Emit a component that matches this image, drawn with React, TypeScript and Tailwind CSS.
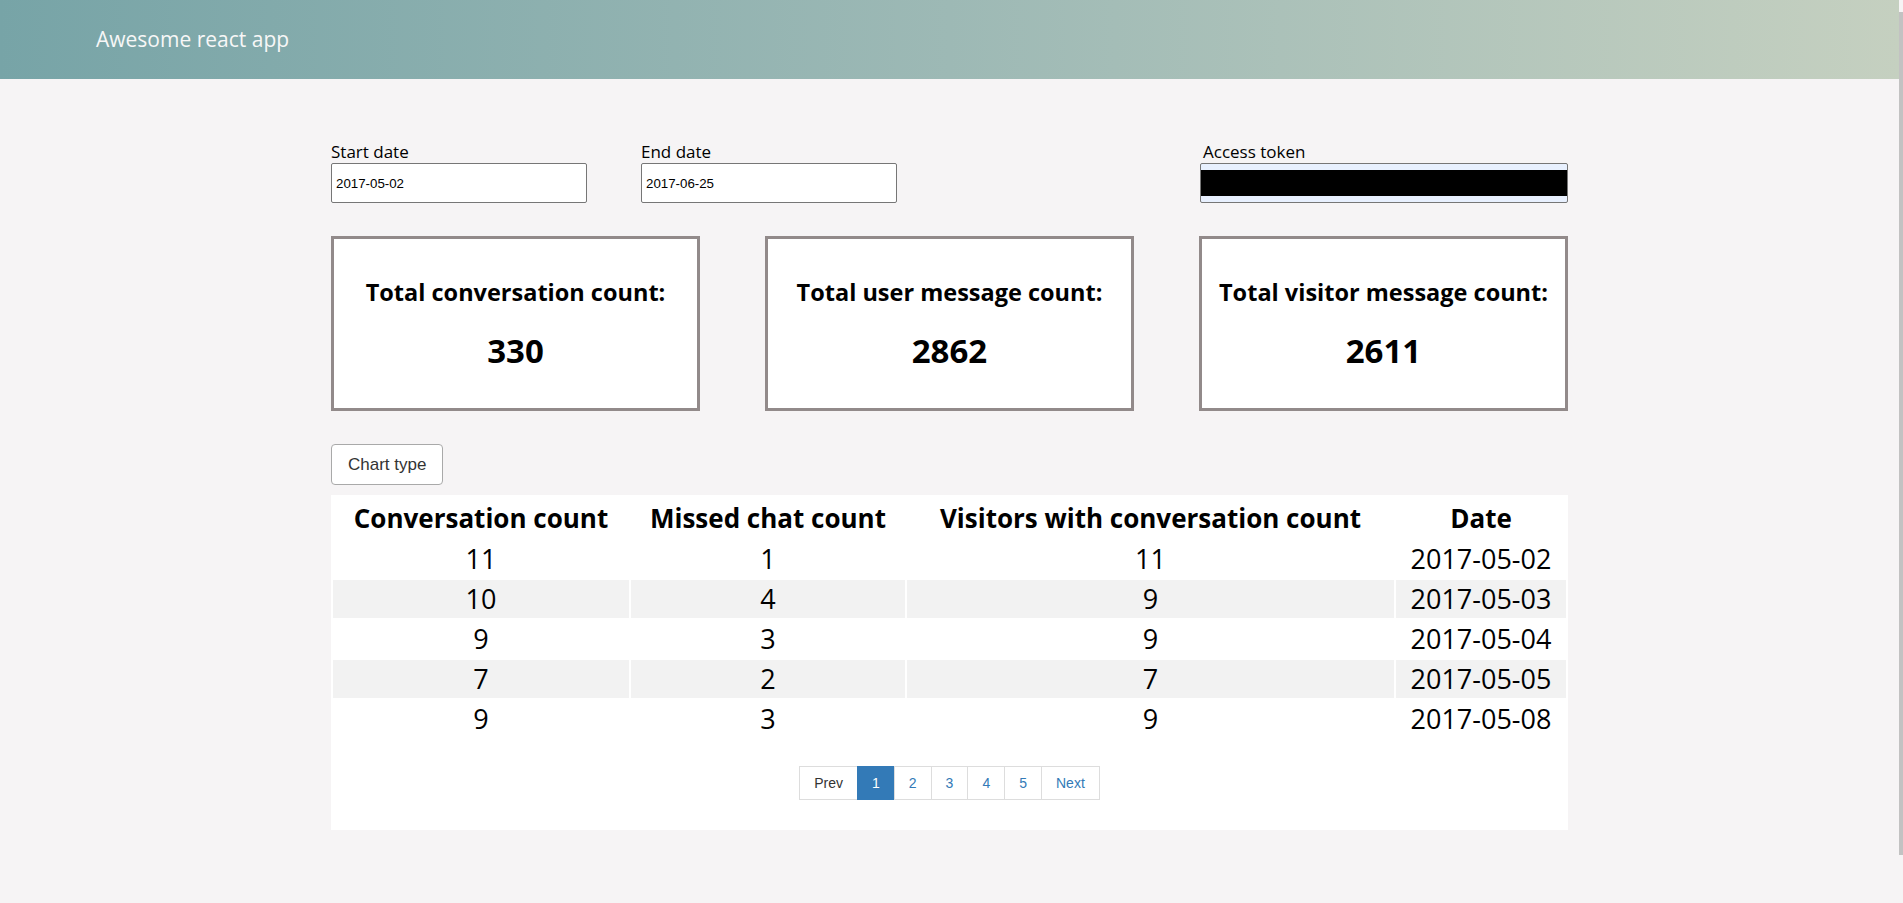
import React from "react";

const rows = [
  { conv: 11, missed: 1, visitors: 11, date: "2017-05-02" },
  { conv: 10, missed: 4, visitors: 9, date: "2017-05-03" },
  { conv: 9, missed: 3, visitors: 9, date: "2017-05-04" },
  { conv: 7, missed: 2, visitors: 7, date: "2017-05-05" },
  { conv: 9, missed: 3, visitors: 9, date: "2017-05-08" },
];

const totals = [
  { label: "Total conversation count:", value: 330 },
  { label: "Total user message count:", value: 2862 },
  { label: "Total visitor message count:", value: 2611 },
];

const pages = ["1", "2", "3", "4", "5"];

export default function App() {
  return (
    <div className="flex min-h-screen bg-[#f6f4f5] font-['Open_Sans',sans-serif] text-black">
      <div className="flex-1 flex flex-col">
        {/* Header */}
        <header className="h-[79px] flex items-center pl-[96px] bg-gradient-to-r from-[#77a4a7] via-[#9db9b5] to-[#c5d0c0]">
          <h1 className="text-[21px] text-[#f7f7f7] font-normal">Awesome react app</h1>
        </header>

        <main className="w-[1237px] mx-auto pt-[61px] pb-[40px]">
          {/* Filters */}
          <div className="flex items-end">
            <div className="flex flex-col w-[256px]">
              <label className="text-[17px] leading-[23px]">Start date</label>
              <input
                readOnly
                value="2017-05-02"
                className="h-[40px] border border-[#767676] rounded-[2px] bg-white px-[4px] font-['Liberation_Sans',Arial,sans-serif] text-[13.3px] outline-none"
              />
            </div>
            <div className="flex flex-col w-[256px] ml-[54px]">
              <label className="text-[17px] leading-[23px]">End date</label>
              <input
                readOnly
                value="2017-06-25"
                className="h-[40px] border border-[#767676] rounded-[2px] bg-white px-[4px] font-['Liberation_Sans',Arial,sans-serif] text-[13.3px] outline-none"
              />
            </div>
            <div className="flex flex-col w-[368px] ml-auto">
              <label className="text-[17px] leading-[23px] pl-[3px]">Access token</label>
              <div className="h-[40px] border border-[#767676] rounded-[2px] bg-[#e8f0fe] flex items-center">
                <div className="w-full h-[26px] bg-black" />
              </div>
            </div>
          </div>

          {/* Totals */}
          <div className="flex justify-between mt-[33px]">
            {totals.map((t) => (
              <div
                key={t.label}
                className="w-[369px] h-[175px] border-[3px] border-[#928a8a] bg-white flex flex-col items-center justify-center gap-[22px]"
              >
                <h3 className="text-[23.5px] leading-[32px] font-bold">{t.label}</h3>
                <div className="text-[33px] leading-[42px] font-bold">{t.value}</div>
              </div>
            ))}
          </div>

          {/* Chart type */}
          <button className="mt-[33px] h-[41px] px-[16px] bg-white border border-[#a9a9a9] rounded-[4px] font-['Liberation_Sans',Arial,sans-serif] text-[17px] text-[#333]">
            Chart type
          </button>

          {/* Table */}
          <div className="mt-[10px] bg-white pb-[30px]">
            <table className="w-full table-fixed border-separate border-spacing-[2px]">
              <thead>
                <tr>
                  <th className="w-[296px] h-[41px] text-[26px] leading-[34px] font-bold">Conversation count</th>
                  <th className="w-[274px] h-[41px] text-[26px] leading-[34px] font-bold">Missed chat count</th>
                  <th className="w-[487px] h-[41px] text-[26px] leading-[34px] font-bold">Visitors with conversation count</th>
                  <th className="w-[170px] h-[41px] text-[26px] leading-[34px] font-bold">Date</th>
                </tr>
              </thead>
              <tbody>
                {rows.map((r, i) => (
                  <tr key={r.date} className={i % 2 === 1 ? "bg-[#f2f2f2]" : "bg-white"}>
                    <td className="h-[38px] text-center text-[27px] leading-[34px]">{r.conv}</td>
                    <td className="h-[38px] text-center text-[27px] leading-[34px]">{r.missed}</td>
                    <td className="h-[38px] text-center text-[27px] leading-[34px]">{r.visitors}</td>
                    <td className="h-[38px] text-center text-[27px] leading-[34px]">{r.date}</td>
                  </tr>
                ))}
              </tbody>
            </table>

            {/* Pagination */}
            <div className="flex justify-center mt-[26px]">
              <ul className="flex font-['Liberation_Sans',Arial,sans-serif] text-[14px] leading-[20px]">
                <li className="px-[14px] py-[6px] border border-[#ddd] bg-white text-[#333]">Prev</li>
                {pages.map((p, i) => (
                  <li
                    key={p}
                    className={
                      i === 0
                        ? "-ml-px px-[14px] py-[6px] border border-[#337ab7] bg-[#337ab7] text-white"
                        : "-ml-px px-[14px] py-[6px] border border-[#ddd] bg-white text-[#337ab7]"
                    }
                  >
                    {p}
                  </li>
                ))}
                <li className="-ml-px px-[14px] py-[6px] border border-[#ddd] bg-white text-[#337ab7]">Next</li>
              </ul>
            </div>
          </div>
        </main>
      </div>
      <div className="w-[4px] pt-[12px] pb-[48px] bg-[#f6f4f5]">
        <div className="h-full bg-[#c2c2c2]" />
      </div>
    </div>
  );
}
